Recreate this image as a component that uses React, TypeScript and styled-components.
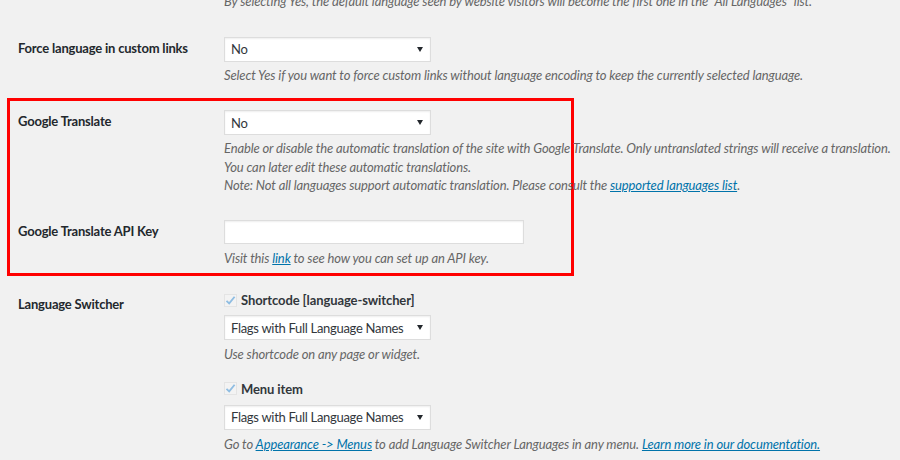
import { FC, ReactNode } from 'react';
import styled, { createGlobalStyle } from 'styled-components';

const GlobalStyle = createGlobalStyle`
    html, body {
        margin: 0;
        padding: 0;
        background: #f1f1f1;
        overflow: hidden;
    }
    body {
        font-family: Lato, 'Open Sans', sans-serif;
        font-size: 13px;
        color: #23282d;
    }
`;

const Page = styled.div`
    width: 900px;
    height: 460px;
    overflow: hidden;
`;

const Row = styled.div<{ $top?: number; $bottom?: number; $inset?: boolean }>`
    display: grid;
    grid-template-columns: 206px 1fr;
    padding: ${(props) => props.$top ?? 0}px 0 ${(props) => props.$bottom ?? 0}px
        ${(props) => (props.$inset ? 8 : 18)}px;
`;

const Label = styled.div<{ $offset?: number }>`
    font-weight: 700;
    font-size: 13px;
    line-height: 18px;
    letter-spacing: -0.2px;
    padding-top: ${(props) => props.$offset ?? 2}px;
    color: #23282d;
`;

const Field = styled.div<{ $gap?: number }>`
    display: flex;
    flex-direction: column;
    align-items: flex-start;
    margin-top: ${(props) => props.$gap ?? 0}px;
`;

const Highlight = styled.div`
    width: 561px;
    margin-left: 7px;
    border: 3px solid #ff0000;
    padding: 9px 0 0;
`;

const SelectBox = styled.div`
    box-sizing: border-box;
    width: 207px;
    height: 25px;
    background: #fff;
    border: 1px solid #ddd;
    box-shadow: inset 0 1px 2px rgba(0, 0, 0, 0.07);
    display: flex;
    align-items: center;
    justify-content: space-between;
    padding: 0 7px 0 6px;
    font-size: 13px;
    letter-spacing: -0.3px;
    color: #32373c;
    white-space: nowrap;
`;

const Arrow = styled.span`
    width: 0;
    height: 0;
    border-left: 3px solid transparent;
    border-right: 3px solid transparent;
    border-top: 5px solid #23282d;
`;

const TextInput = styled.div`
    box-sizing: border-box;
    width: 300px;
    height: 24px;
    background: #fff;
    border: 1px solid #ddd;
    box-shadow: inset 0 1px 2px rgba(0, 0, 0, 0.07);
`;

const Description = styled.p<{ $gap?: number }>`
    margin: ${(props) => props.$gap ?? 4}px 0 0;
    font-style: italic;
    font-size: 13px;
    line-height: 18.5px;
    letter-spacing: -0.13px;
    color: #666;
    white-space: nowrap;
`;

const TopNote = styled(Description)`
    margin: -8px 0 0 224px;
`;

const Link = styled.a`
    color: #0073aa;
    text-decoration: underline;
`;

const CheckRow = styled.label<{ $gap?: number }>`
    display: flex;
    align-items: center;
    gap: 4px;
    margin-top: ${(props) => props.$gap ?? 0}px;
    font-weight: 700;
    font-size: 13px;
    line-height: 18px;
    letter-spacing: -0.1px;
    color: #32373c;
`;

const CheckBox = styled.span`
    box-sizing: border-box;
    width: 13px;
    height: 13px;
    border: 1px solid #e4e4e4;
    background: #f3f3f3;
    display: inline-flex;
    align-items: center;
    justify-content: center;
`;

const Select: FC<{ value: string }> = ({ value }) => (
    <SelectBox>
        <span>{value}</span>
        <Arrow />
    </SelectBox>
);

const Check: FC<{ children: ReactNode; gap?: number }> = ({ children, gap }) => (
    <CheckRow $gap={gap}>
        <CheckBox>
            <svg width="11" height="11" viewBox="0 0 11 11">
                <path d="M1.5 5.8 L4.2 8.4 L9.6 1.8" fill="none" stroke="#8fbde2" strokeWidth="1.8" />
            </svg>
        </CheckBox>
        {children}
    </CheckRow>
);

const App: FC = () => (
    <Page>
        <GlobalStyle />
        <TopNote>
            By selecting Yes, the default language seen by website visitors will become the first one in the “All
            Languages” list.
        </TopNote>

        <Row $top={26} $bottom={14}>
            <Label>Force language in custom links</Label>
            <Field>
                <Select value="No" />
                <Description>
                    Select Yes if you want to force custom links without language encoding to keep the currently
                    selected language.
                </Description>
            </Field>
        </Row>

        <Highlight>
            <Row $inset $bottom={25}>
                <Label>Google Translate</Label>
                <Field>
                    <Select value="No" />
                    <Description>
                        Enable or disable the automatic translation of the site with Google Translate. Only
                        untranslated strings will receive a translation.
                        <br />
                        You can later edit these automatic translations.
                        <br />
                        Note: Not all languages support automatic translation. Please consult the{' '}
                        <Link href="#">supported languages list</Link>.
                    </Description>
                </Field>
            </Row>
            <Row $inset $bottom={6}>
                <Label>Google Translate API Key</Label>
                <Field>
                    <TextInput />
                    <Description $gap={5}>
                        Visit this <Link href="#">link</Link> to see how you can set up an API key.
                    </Description>
                </Field>
            </Row>
        </Highlight>

        <Row $top={15}>
            <Label $offset={4}>Language Switcher</Label>
            <Field>
                <Check>Shortcode [language-switcher]</Check>
                <Field $gap={6}>
                    <Select value="Flags with Full Language Names" />
                </Field>
                <Description $gap={5}>Use shortcode on any page or widget.</Description>
                <Check gap={16}>Menu item</Check>
                <Field $gap={7}>
                    <Select value="Flags with Full Language Names" />
                </Field>
                <Description $gap={5}>
                    Go to <Link href="#">Appearance -&gt; Menus</Link> to add Language Switcher Languages in any menu.{' '}
                    <Link href="#">Learn more in our documentation.</Link>
                </Description>
            </Field>
        </Row>
    </Page>
);

export default App;
